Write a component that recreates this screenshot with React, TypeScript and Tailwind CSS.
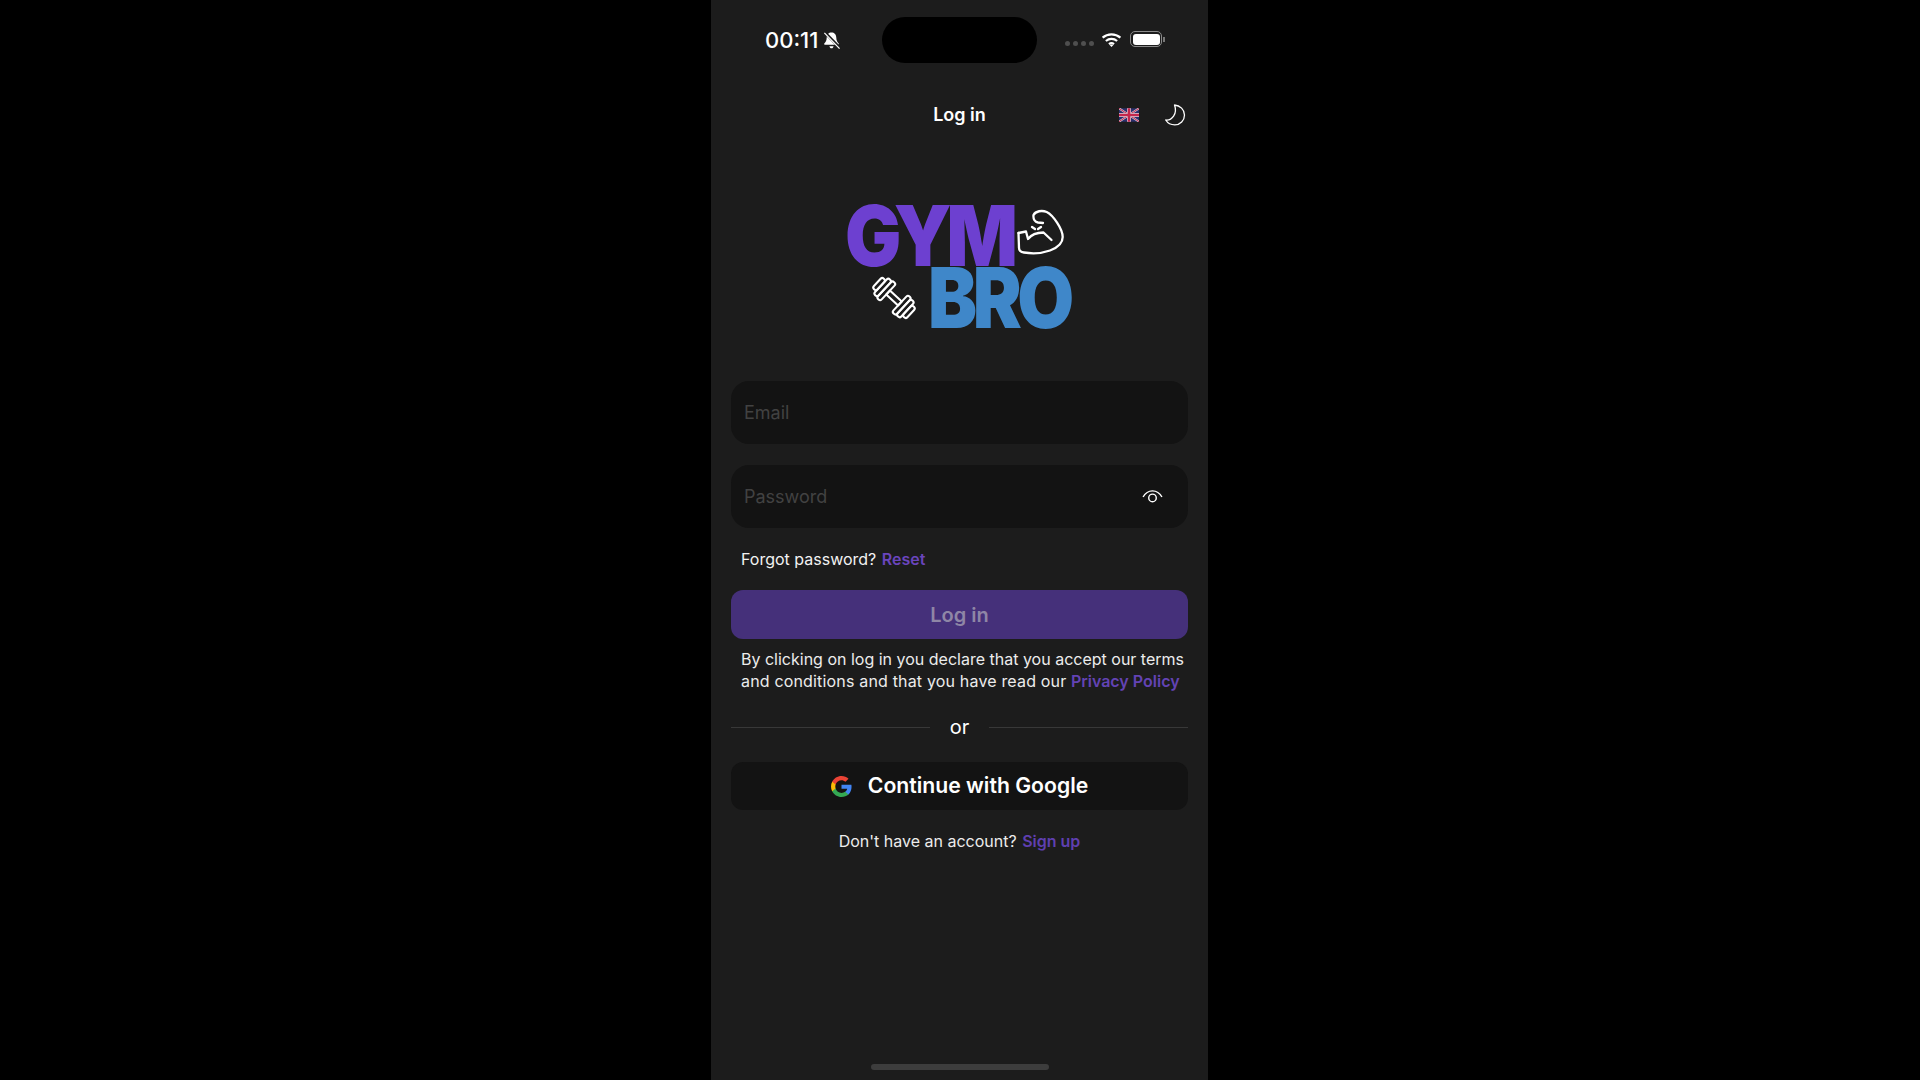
const Bell = () => (
  <svg viewBox="0 0 20 20" className="w-[19px] h-[19px] ml-[4px]">
    <path d="M10 1.500c-3 0-5 2.200-5 5.200 0 3.800-1.400 5.200-2.600 6.500-.4.500-.1 1.300.6 1.300h14c.7 0 1-.8.6-1.300-1.200-1.300-2.600-2.700-2.600-6.500 0-3-2-5.200-5-5.200z" fill="#fff" />
    <path d="M7.800 16c.2 1.300 1.100 2.200 2.200 2.200s2-.9 2.200-2.200z" fill="#fff" />
    <path d="M3 1.500 19 18" stroke="#1c1c1c" strokeWidth="3" />
    <path d="M2.500 2 18.500 18.500" stroke="#fff" strokeWidth="1.300" />
  </svg>
);

const Wifi = () => (
  <svg viewBox="0 0 22 16" className="w-[21px] h-[15px]" fill="none" stroke="#fff" strokeWidth="2.300">
    <path d="M1.500 6c5.400-4.700 13.600-4.700 19 0" />
    <path d="M5 9.600c3.500-3 8.500-3 12 0" />
    <path d="M8.300 13c1.600-1.300 3.800-1.300 5.400 0" />
    <path d="M11 16l-2-2.200c1.200-.8 2.800-.8 4 0z" fill="#fff" stroke="none" />
  </svg>
);

const Flag = () => (
  <svg viewBox="0 0 60 40" className="w-[20px] h-[14px]">
    <rect width="60" height="40" fill="#2a2f6e" />
    <path d="M0 0 60 40M60 0 0 40" stroke="#d9d2dc" strokeWidth="6" />
    <path d="M0 0 60 40M60 0 0 40" stroke="#c4264c" strokeWidth="3" />
    <path d="M30 0v40M0 20h60" stroke="#d9d2dc" strokeWidth="12" />
    <path d="M30 0v40M0 20h60" stroke="#c4264c" strokeWidth="8" />
  </svg>
);

const Moon = () => (
  <svg viewBox="0 0 22 22" className="w-[22px] h-[22px]" fill="none" stroke="#fff" strokeWidth="1.300" strokeLinejoin="round">
    <path d="M10.500 1c5.600.4 10 4.600 10 10 0 5.500-4.300 9.900-9.700 9.900-3.800 0-7.200-1.900-9.100-4.900 6 .8 12.100-6 8.800-15z" />
  </svg>
);

const Eye = () => (
  <svg viewBox="0 0 22 18" className="w-[21px] h-[17px]" fill="none" stroke="#fff" strokeWidth="1.500">
    <path d="M1 9.500C3.400 5.200 7 3 11 3s7.600 2.200 10 6.500" />
    <circle cx="11" cy="10.500" r="4" />
  </svg>
);

const Muscle = () => (
  <svg viewBox="17 14 47 47" className="w-[47px] h-[47px] shrink-0" fill="none" stroke="#fff" strokeWidth="2.300" strokeLinecap="round" strokeLinejoin="round">
    <path d="M18.500 39 19 54c0 2.500 2 4 5 4.500 9 1.500 19 .5 26-2 8-3 12.700-7.500 12.700-13.500 0-8-9.700-22-16-25-4.700-2-11.200-1-13.200 3-.5 4 1.500 7 4.500 7.500l5 .5" />
    <path d="M18.500 39 26 37.500 28 45c3-4 9-6.500 15.500-6.500L51.500 46" />
    <path d="M32 33l3 2M41 33l-3 2" />
  </svg>
);

const Dumbbell = () => (
  <svg viewBox="-29 -29 58 58" className="w-[52px] h-[52px] shrink-0" fill="none" stroke="#fff" strokeWidth="2.300" strokeLinejoin="round">
    <g transform="rotate(43)">
      <rect x="-9" y="-3" width="18" height="6" />
      <rect x="-14.500" y="-13" width="5.500" height="26" rx="2.500" />
      <rect x="-20" y="-12" width="5.500" height="24" rx="2.500" />
      <rect x="-25.500" y="-8" width="5.500" height="16" rx="2.500" />
      <rect x="9" y="-13" width="5.500" height="26" rx="2.500" />
      <rect x="14.500" y="-12" width="5.500" height="24" rx="2.500" />
      <rect x="20" y="-8" width="5.500" height="16" rx="2.500" />
    </g>
  </svg>
);

const GoogleG = () => (
  <svg viewBox="0 0 24 24" className="w-[21px] h-[21px] shrink-0">
    <path fill="#4285F4" d="M23.500 12.300c0-.8-.1-1.600-.2-2.300H12v4.500h6.500c-.3 1.500-1.100 2.800-2.400 3.600v3h3.900c2.200-2.100 3.500-5.200 3.500-8.800z" />
    <path fill="#34A853" d="M12 24c3.200 0 6-1.100 8-2.900l-3.900-3c-1.100.7-2.500 1.200-4.100 1.200-3.100 0-5.800-2.100-6.700-5H1.300v3.100C3.300 21.300 7.300 24 12 24z" />
    <path fill="#FBBC05" d="M5.300 14.300c-.5-1.500-.5-3.100 0-4.600V6.600h-4C-.4 10-.4 14 1.300 17.400z" />
    <path fill="#EA4335" d="M12 4.800c1.800 0 3.300.6 4.600 1.800L20 3.200C17.900 1.200 15.200 0 12 0 7.300 0 3.300 2.700 1.300 6.600l4 3.100c.9-2.800 3.600-4.900 6.700-4.900z" />
  </svg>
);

export default function App() {
  return (
    <div className="flex justify-center bg-black h-[1080px] font-['Inter',sans-serif]">
      <div className="w-[497px] mr-[1px] flex flex-col bg-[#1c1c1c] text-white overflow-hidden">
        {/* status bar */}
        <div className="flex items-center mt-[17px] h-[46px] pl-[54px]">
          <div className="flex items-center w-[117px]">
            <span className="text-[22px] font-medium leading-none">00:11</span>
            <Bell />
          </div>
          <div className="w-[155px] h-[46px] rounded-full bg-black" />
          <div className="flex items-center ml-[28px]">
            <div className="flex gap-[3px] mt-[6px]">
              <span className="w-[5px] h-[5px] rounded-full bg-[#4f4f4f]" />
              <span className="w-[5px] h-[5px] rounded-full bg-[#4f4f4f]" />
              <span className="w-[5px] h-[5px] rounded-full bg-[#4f4f4f]" />
              <span className="w-[5px] h-[5px] rounded-full bg-[#4f4f4f]" />
            </div>
            <div className="ml-[7px] -mt-[2px]"><Wifi /></div>
            <div className="flex items-center ml-[8px] -mt-[2px]">
              <div className="w-[32px] h-[16px] rounded-[5px] border border-[#8a8a8a] p-[1.500px]">
                <div className="w-full h-full rounded-[3px] bg-white" />
              </div>
              <span className="w-[1.500px] h-[5px] bg-[#777] ml-[1px]" />
            </div>
          </div>
        </div>

        {/* header */}
        <div className="relative flex items-center justify-center mt-[26px] h-[50px]">
          <span className="text-[18px] font-semibold">Log in</span>
          <div className="absolute right-[22px] top-[15px] flex items-center gap-[25px]">
            <Flag />
            <Moon />
          </div>
        </div>

        {/* logo */}
        <div className="flex flex-col mt-[65px] h-[127px]">
          <div className="flex items-start h-[62px] pl-[134px]">
            <span className="inline-block w-[172px] mt-[2px] origin-left scale-x-[0.89] text-[84px] font-black leading-[60px] tracking-[-0.07em] text-[#6d40d0]">GYM</span>
            <div className="mt-[4px]"><Muscle /></div>
          </div>
          <div className="flex items-start h-[65px] pl-[157px]">
            <div className="mt-[6px] w-[60px]"><Dumbbell /></div>
            <span className="inline-block origin-left scale-x-[0.875] text-[84px] font-black leading-[64px] tracking-[-0.06em] text-[#3f87c9]">BRO</span>
          </div>
        </div>

        {/* form */}
        <div className="flex flex-col px-[20px] mt-[50px]">
          <input placeholder="Email" className="h-[63px] rounded-[18px] bg-[#131313] px-[13px] text-[18px] placeholder:text-[#424242] outline-none" />
          <div className="flex items-center h-[63px] mt-[21px] rounded-[18px] bg-[#131313] pl-[13px] pr-[25px]">
            <input placeholder="Password" className="flex-1 min-w-0 text-[18px] placeholder:text-[#424242] outline-none bg-transparent" />
            <Eye />
          </div>
          <p className="mt-[20px] px-[10px] text-[16px] leading-[22px] text-[#f2f2f2]">
            Forgot password? <span className="ml-[1px] font-semibold text-[#6a45bd]">Reset</span>
          </p>
          <button className="h-[49px] mt-[20px] rounded-[12px] bg-[#45307a] text-[20px] font-semibold text-[#8f86a6]">Log in</button>
          <p className="mt-[10px] px-[10px] text-[16px] leading-[21.500px] text-[#ececec] whitespace-nowrap">
            By clicking on log in you declare that you accept our terms<br />
            <span className="tracking-[0.17px]">and conditions and that you have read our</span> <span className="font-semibold text-[#6343b4]">Privacy Policy</span>
          </p>
          <div className="flex items-center gap-[20px] mt-[23px]">
            <span className="flex-1 h-px bg-[#383838]" />
            <span className="text-[20px] leading-[24px]">or</span>
            <span className="flex-1 h-px bg-[#383838]" />
          </div>
          <button className="flex items-center justify-center gap-[16px] h-[48px] mt-[23px] rounded-[12px] bg-[#131313] text-[21.200px] font-semibold">
            <GoogleG />
            Continue with Google
          </button>
          <p className="mt-[20px] text-center text-[16px] leading-[22px] text-[#ececec]">
            Don't have an account? <span className="ml-[1px] font-semibold text-[#5f3fb0]">Sign up</span>
          </p>
        </div>

        {/* home indicator */}
        <div className="mt-auto mb-[10px] mx-auto w-[178px] h-[6px] rounded-full bg-[#3d3d3d]" />
      </div>
    </div>
  );
}
